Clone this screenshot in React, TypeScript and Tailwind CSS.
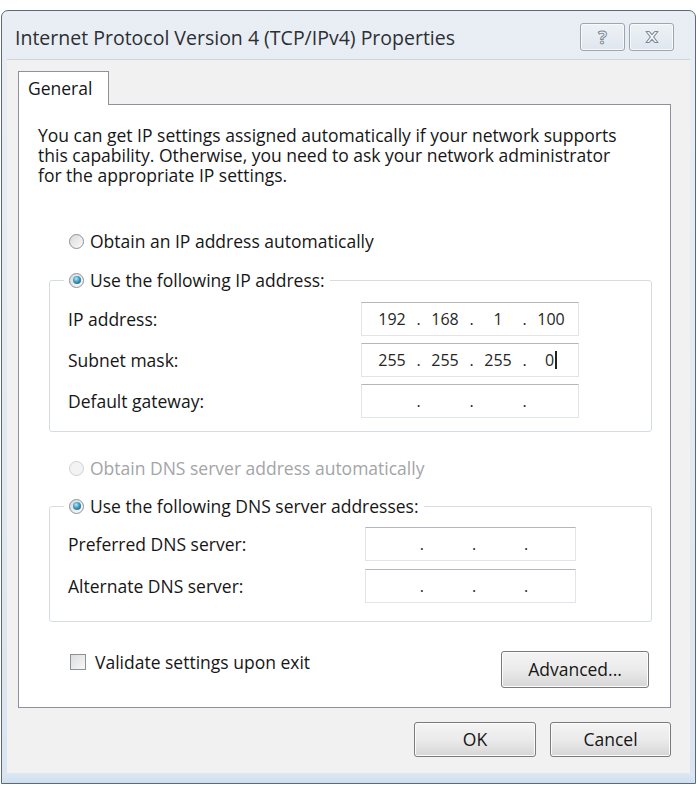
import { Fragment } from "react";
import clsx from "clsx";

function Radio({ checked, disabled }: { checked?: boolean; disabled?: boolean }) {
  return (
    <span
      className={clsx(
        "flex h-[15px] w-[15px] shrink-0 items-center justify-center rounded-full border",
        disabled
          ? "border-[#cfd1d3] bg-[#f3f3f3]"
          : "border-[#8c9196] bg-linear-to-br from-[#d9dadc] to-[#fbfbfb]"
      )}
    >
      {checked && (
        <span className="h-[8px] w-[8px] rounded-full bg-[radial-gradient(circle_at_40%_35%,#b5ecfb_0%,#3f97bd_45%,#17506e_100%)]" />
      )}
    </span>
  );
}

function RadioRow({
  label,
  checked,
  disabled,
}: {
  label: string;
  checked?: boolean;
  disabled?: boolean;
}) {
  return (
    <div className="flex h-[20px] items-center gap-[6px]">
      <Radio checked={checked} disabled={disabled} />
      <span className={disabled ? "text-[#a3a5a8]" : "text-[#161616]"}>{label}</span>
    </div>
  );
}

// four-part address box, like the Win32 IP control
function IpField({
  octets,
  caret,
  className,
}: {
  octets: string[];
  caret?: boolean;
  className?: string;
}) {
  return (
    <div
      className={clsx(
        "flex h-[34px] items-center border border-[#e2e4e9] border-t-[#b3b6bd] bg-white pl-[7px] text-[16px] text-[#262626]",
        className
      )}
    >
      {[0, 1, 2, 3].map((i) => (
        <Fragment key={i}>
          <span className="flex w-[46px] items-center justify-center">
            {octets[i]}
            {caret && i === 3 && <span className="ml-[1px] inline-block h-[18px] w-[2px] bg-[#222]" />}
          </span>
          {i < 3 && <span className="w-[7px] text-center">.</span>}
        </Fragment>
      ))}
    </div>
  );
}

function FieldRow({
  label,
  labelWidth,
  children,
}: {
  label: string;
  labelWidth: string;
  children: React.ReactNode;
}) {
  return (
    <div className="flex items-center">
      <span className={clsx("text-[#161616]", labelWidth)}>{label}</span>
      {children}
    </div>
  );
}

function WinButton({ label, className }: { label: string; className?: string }) {
  return (
    <button
      className={clsx(
        "flex items-center justify-center rounded-[3px] border border-[#7a7a7a] bg-linear-to-b from-[#f4f4f4] via-[#ebebeb] to-[#d6d6d6] text-[17.5px] text-[#161616] shadow-[inset_0_0_0_1px_#fcfcfc]",
        className
      )}
    >
      {label}
    </button>
  );
}

function CaptionButton({ children }: { children: React.ReactNode }) {
  return (
    <div className="flex h-[28px] w-[45px] items-center justify-center rounded-[3px] border border-[#9ba6b3] bg-linear-to-b from-[#eef2f6] to-[#dfe6ee] shadow-[inset_0_0_0_1px_#f7f9fb]">
      {children}
    </div>
  );
}

export default function App() {
  const empty = ["", "", "", ""];

  return (
    <div className="h-[801px] w-[698px] bg-white pt-[10px] font-['Open_Sans',sans-serif] text-[17.5px] leading-[19px]">
      <div className="ml-[1px] flex h-[774px] w-[695px] flex-col rounded-t-[7px] border border-[#5d6978] bg-linear-to-b from-[#e9eef4] to-[#dbe5ef]">
        {/* caption bar */}
        <div className="flex h-[48px] shrink-0 items-center justify-between pl-[13px] pr-[21px] pt-[4px]">
          <span className="text-[19.5px] text-[#2c2f33]">Internet Protocol Version 4 (TCP/IPv4) Properties</span>
          <div className="flex gap-[4px]">
            <CaptionButton>
              <span className="text-[18px] font-bold leading-none text-[#f4f6f8] [-webkit-text-stroke:1px_#7d8896]">?</span>
            </CaptionButton>
            <CaptionButton>
              <svg width="16" height="14" viewBox="0 0 16 14">
                <path
                  d="M2 1.5h3.2L8 4.6l2.8-3.1H14L9.6 7l4.4 5.5h-3.2L8 9.4l-2.8 3.1H2L6.4 7z"
                  fill="#f4f6f8"
                  stroke="#7d8896"
                  strokeWidth="1.1"
                  strokeLinejoin="round"
                />
              </svg>
            </CaptionButton>
          </div>
        </div>

        {/* client area */}
        <div className="mx-[5px] flex flex-1 flex-col border-t border-[#cdd5de] bg-[#f1f1f1] pl-[11px] pr-[19px] pt-[11px]">
          {/* tab strip */}
          <div className="relative z-10 -mb-px flex">
            <div className="flex h-[34px] w-[91px] items-center border border-b-0 border-[#8e9199] bg-white pl-[9px] text-[#161616]">
              General
            </div>
          </div>

          {/* tab page */}
          <div className="flex h-[604px] flex-col border border-[#8e9199] bg-white px-[19px] pt-[20px]">
            <p className="leading-[20px] text-[#161616]">
              You can get IP settings assigned automatically if your network supports
              <br />
              this capability. Otherwise, you need to ask your network administrator
              <br />
              for the appropriate IP settings.
            </p>

            <div className="ml-[31px] mt-[46px]">
              <RadioRow label="Obtain an IP address automatically" />
            </div>

            <fieldset className="ml-[11px] mt-[19px] w-[603px] rounded-[3px] border border-[#d5dde3] pb-[13px]">
              <legend className="ml-[14px] px-[5px]">
                <RadioRow label="Use the following IP address:" checked />
              </legend>
              <div className="mt-[12px] flex flex-col gap-[7px] pl-[18px]">
                <FieldRow label="IP address:" labelWidth="w-[293px]">
                  <IpField octets={["192", "168", "1", "100"]} className="w-[218px]" />
                </FieldRow>
                <FieldRow label="Subnet mask:" labelWidth="w-[293px]">
                  <IpField octets={["255", "255", "255", "0"]} caret className="w-[218px]" />
                </FieldRow>
                <FieldRow label="Default gateway:" labelWidth="w-[293px]">
                  <IpField octets={empty} className="w-[218px]" />
                </FieldRow>
              </div>
            </fieldset>

            <div className="ml-[31px] mt-[26px]">
              <RadioRow label="Obtain DNS server address automatically" disabled />
            </div>

            <fieldset className="ml-[11px] mt-[18px] w-[603px] rounded-[3px] border border-[#d5dde3] pb-[18px]">
              <legend className="ml-[14px] px-[5px]">
                <RadioRow label="Use the following DNS server addresses:" checked />
              </legend>
              <div className="mt-[11px] flex flex-col gap-[8px] pl-[18px]">
                <FieldRow label="Preferred DNS server:" labelWidth="w-[297px]">
                  <IpField octets={empty} className="w-[211px]" />
                </FieldRow>
                <FieldRow label="Alternate DNS server:" labelWidth="w-[297px]">
                  <IpField octets={empty} className="w-[211px]" />
                </FieldRow>
              </div>
            </fieldset>

            <div className="mt-[29px] flex items-start justify-between pr-[2px]">
              <div className="ml-[32px] mt-[1px] flex h-[20px] items-center gap-[9px]">
                <span className="h-[16px] w-[16px] border border-[#8f9295] bg-linear-to-br from-[#dcdddf] to-[#f8f8f8]" />
                <span className="text-[#161616]">Validate settings upon exit</span>
              </div>
              <WinButton label="Advanced..." className="h-[37px] w-[148px]" />
            </div>
          </div>

          {/* dialog buttons */}
          <div className="mt-[14px] flex justify-end gap-[14px]">
            <WinButton label="OK" className="h-[35px] w-[122px]" />
            <WinButton label="Cancel" className="h-[35px] w-[121px]" />
          </div>
        </div>

        {/* bottom frame edge */}
        <div className="mx-[1px] h-[10px] shrink-0 bg-linear-to-b from-[#dce8f4] to-[#cfdeee]" />
      </div>
    </div>
  );
}
